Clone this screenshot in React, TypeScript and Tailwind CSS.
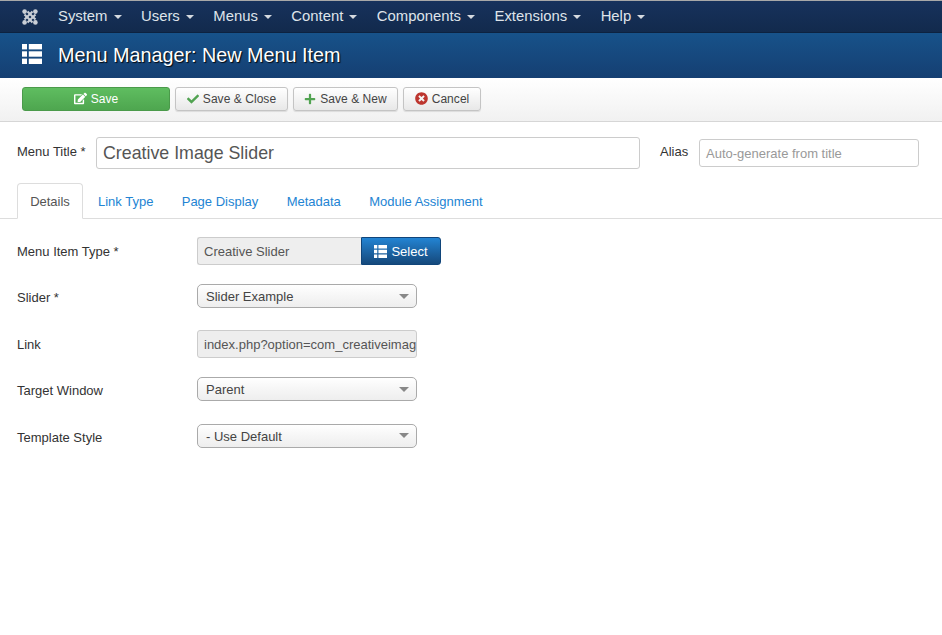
import { FaCheck, FaEdit, FaPlus, FaTimesCircle } from 'react-icons/fa'

const navItems = ['System', 'Users', 'Menus', 'Content', 'Components', 'Extensions', 'Help']
const tabs = ['Link Type', 'Page Display', 'Metadata', 'Module Assignment']

function ListIcon({ className }: { className: string }) {
  return (
    <svg viewBox="0 0 20 20" className={className} fill="currentColor">
      <rect x="0" y="0" width="5" height="5.4" />
      <rect x="0" y="7.3" width="5" height="5.4" />
      <rect x="0" y="14.6" width="5" height="5.4" />
      <rect x="6.8" y="0" width="13.2" height="5.4" />
      <rect x="6.8" y="7.3" width="13.2" height="5.4" />
      <rect x="6.8" y="14.6" width="13.2" height="5.4" />
    </svg>
  )
}

function JoomlaLogo() {
  return (
    <svg viewBox="0 0 16 16" className="h-[16px] w-[16px] text-[#c9ced6]" fill="none" stroke="currentColor">
      <path d="M2.5 5.5 L8 11 L10.5 13.5 M5.5 2.5 L13.5 10.5" strokeWidth="2.1" />
      <path d="M10.5 2.5 L2.5 10.5 M13.5 5.5 L5.5 13.5" strokeWidth="2.1" />
      <circle cx="2.6" cy="2.6" r="2.3" fill="currentColor" stroke="none" />
      <circle cx="13.4" cy="2.6" r="2.3" fill="currentColor" stroke="none" />
      <circle cx="2.6" cy="13.4" r="2.3" fill="currentColor" stroke="none" />
      <circle cx="13.4" cy="13.4" r="2.3" fill="currentColor" stroke="none" />
    </svg>
  )
}

function ToolButton({ label, icon, className }: { label: string; icon: React.ReactNode; className: string }) {
  return (
    <div
      className={`flex h-[24px] items-center justify-center gap-[4px] rounded-[3px] border border-[#c4c4c4] bg-gradient-to-b from-white to-[#e8e8e8] text-[12px] tracking-[0.05px] text-[#444] shadow-[0_1px_1px_rgba(0,0,0,0.1)] ${className}`}
    >
      {icon}
      <span>{label}</span>
    </div>
  )
}

function SelectBox({ value }: { value: string }) {
  return (
    <div className="mt-[-3px] flex h-[24px] w-[220px] items-center justify-between rounded-[5px] border border-[#aaa] bg-gradient-to-b from-white via-[#f6f6f6] to-[#eeeeee] pl-[8px] pr-[4px] text-[13px] text-[#444]">
      <span className="pt-[2px]">{value}</span>
      <span className="mr-[3px] h-0 w-0 border-x-[5px] border-t-[5px] border-x-transparent border-t-[#888]" />
    </div>
  )
}

function FormRow({ label, children }: { label: string; children: React.ReactNode }) {
  return (
    <div className="flex h-[28px] items-center">
      <label className="w-[180px] pt-[1px] text-[13px] text-[#333]">{label}</label>
      {children}
    </div>
  )
}

export default function App() {
  return (
    <div className="min-h-[635px] bg-white font-['Liberation_Sans',Arial,sans-serif]">
      <nav className="flex h-[32px] items-center border-t border-[#a8a8a8] bg-gradient-to-b from-[#17325c] to-[#122a4d] pl-[22px] text-[14.85px] text-[#dfe4ea]">
        <JoomlaLogo />
        <div className="ml-[20px] flex gap-[19.5px]">
          {navItems.map((item) => (
            <span key={item} className="flex items-center gap-[6px]">
              {item}
              <span className="mt-[1px] h-0 w-0 border-x-[4px] border-t-[4px] border-x-transparent border-t-[#d5dae0]" />
            </span>
          ))}
        </div>
      </nav>

      <header className="flex h-[46px] items-center border-t border-[#0d2240] bg-gradient-to-b from-[#17528a] to-[#153f72] pl-[22px] text-white">
        <ListIcon className="mb-[4px] h-[20px] w-[20px]" />
        <h1 className="ml-[16px] text-[19.8px] leading-none [text-shadow:1px_1px_1px_rgba(0,0,0,0.9)]">
          Menu Manager: New Menu Item
        </h1>
      </header>

      <div className="flex h-[44px] items-center gap-[5px] border-b border-[#d6d6d6] bg-gradient-to-b from-white to-[#f1f1f1] pb-[2px] pl-[22px]">
        <div className="flex h-[24px] w-[148px] items-center justify-center gap-[4px] rounded-[3px] border border-[#4a9a4a] bg-gradient-to-b from-[#5fbd60] to-[#4ea64f] text-[12px] text-white">
          <FaEdit className="h-[13px] w-[13px]" />
          <span>Save</span>
        </div>
        <ToolButton label="Save & Close" className="w-[113px]" icon={<FaCheck className="h-[12px] w-[12px] text-[#51a351]" />} />
        <ToolButton label="Save & New" className="w-[105px]" icon={<FaPlus className="h-[12px] w-[12px] text-[#51a351]" />} />
        <ToolButton label="Cancel" className="w-[78px]" icon={<FaTimesCircle className="h-[13px] w-[13px] text-[#bd362f]" />} />
      </div>

      <div className="flex items-start pl-[17px] pr-[23px] pt-[15px]">
        <label className="mt-[5px] w-[79px] text-[13px] text-[#333]">Menu Title *</label>
        <div className="flex h-[32px] w-[544px] items-center rounded-[3px] border border-[#ccc] pl-[6px] text-[17.8px] text-[#555]">
          Creative Image Slider
        </div>
        <label className="ml-[20px] mt-[5px] w-[39px] text-[13px] text-[#333]">Alias</label>
        <div className="mt-[2px] flex h-[28px] w-[220px] items-center rounded-[3px] border border-[#ccc] pl-[6px] pt-[2px] text-[13px] text-[#999]">
          Auto-generate from title
        </div>
      </div>

      <div className="mt-[14px] flex h-[36px] items-end border-b border-[#ddd] pl-[17px]">
        <div className="-mb-px flex h-[36px] w-[66px] items-center justify-center rounded-t-[4px] border border-[#ddd] border-b-white bg-white pt-[2px] text-[13px] text-[#555]">
          Details
        </div>
        <div className="flex h-[35px] items-center gap-[28.3px] pl-[15px] pt-[2px] text-[13px] text-[#2384d3]">
          {tabs.map((tab) => (
            <span key={tab}>{tab}</span>
          ))}
        </div>
      </div>

      <div className="flex flex-col gap-[18.5px] pl-[17px] pt-[18px]">
        <FormRow label="Menu Item Type *">
          <div className="flex h-[28px] w-[164px] items-center rounded-l-[3px] border border-r-0 border-[#ccc] bg-[#eeeeee] pl-[6px] pt-[2px] text-[13px] text-[#555]">
            Creative Slider
          </div>
          <div className="flex h-[28px] w-[80px] items-center justify-center gap-[4px] rounded-r-[3px] border border-[#10457a] bg-gradient-to-b from-[#2384d3] to-[#15497c] text-[13px] text-white">
            <ListIcon className="h-[13px] w-[13px]" />
            <span className="pt-[2px]">Select</span>
          </div>
        </FormRow>
        <FormRow label="Slider *">
          <SelectBox value="Slider Example" />
        </FormRow>
        <FormRow label="Link">
          <div className="flex h-[28px] w-[220px] items-center overflow-hidden whitespace-nowrap rounded-[3px] border border-[#ccc] bg-[#eeeeee] pl-[6px] pr-[1px] pt-[2px] text-[13px] text-[#555]">
            index.php?option=com_creativeimageslider
          </div>
        </FormRow>
        <FormRow label="Target Window">
          <SelectBox value="Parent" />
        </FormRow>
        <FormRow label="Template Style">
          <SelectBox value="- Use Default" />
        </FormRow>
      </div>
    </div>
  )
}
